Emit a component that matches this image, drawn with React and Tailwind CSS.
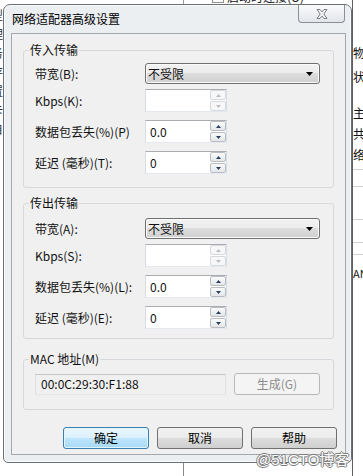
import React from 'react';

const btnFace = 'bg-[linear-gradient(#f2f2f2,#ebebeb_50%,#dddddd_50%,#cfcfcf)]';

function Arrow({ up, color }) {
  return (
    <svg width="5" height="3" viewBox="0 0 5 3">
      <path d={up ? 'M0 3h5L2.5 0z' : 'M0 0h5L2.5 3z'} fill={color} />
    </svg>
  );
}

function Combo({ value }) {
  return (
    <div className={`flex h-[21px] w-[175px] items-center justify-between rounded-[3px] border border-[#707070] pl-[2px] pr-[6px] shadow-[inset_0_0_0_1px_#fbfbfb] ${btnFace}`}>
      <span className="leading-[16px]">{value}</span>
      <svg width="7" height="4" viewBox="0 0 7 4">
        <path d="M0 0h7L3.5 4z" fill="#000" />
      </svg>
    </div>
  );
}

function Spin({ value, disabled }) {
  const arrow = disabled ? '#b8bcc2' : '#26405e';
  return (
    <div className="flex h-[23px] w-[82px] border border-[#abadb3] border-x-[#d8dbe2] border-b-[#e3e9ef] bg-white">
      <div className="flex flex-1 items-center pl-[4px] leading-[16px]">{value}</div>
      <div className="flex w-[16px] flex-col gap-[1px]">
        <div className={`flex flex-1 items-center justify-center rounded-[2px] border ${disabled ? 'border-[#d6d9dd] bg-[#f7f7f7]' : 'border-[#b9bdc2] bg-[linear-gradient(#fafafa,#e4e6e9)]'}`}>
          <Arrow up color={arrow} />
        </div>
        <div className={`flex flex-1 items-center justify-center rounded-[2px] border ${disabled ? 'border-[#d6d9dd] bg-[#f7f7f7]' : 'border-[#b9bdc2] bg-[linear-gradient(#fafafa,#e4e6e9)]'}`}>
          <Arrow color={arrow} />
        </div>
      </div>
    </div>
  );
}

function Row({ label, children }) {
  return (
    <div className="flex items-center">
      <div className="w-[110px] leading-[16px]">{label}</div>
      {children}
    </div>
  );
}

function Group({ title, className, inner, children }) {
  return (
    <fieldset className={`mx-[11px] rounded-[3px] border border-[#d5d9dd] ${className}`}>
      <legend className="ml-[5px] px-[1px] leading-[16px]">{title}</legend>
      <div className={inner}>{children}</div>
    </fieldset>
  );
}

function Button({ children, primary, disabled, w = 'w-[86px]' }) {
  let look = `border-[#707070] ${btnFace} text-black`;
  if (primary) look = 'border-[#3c7fb1] bg-[linear-gradient(#eaf6fd,#d9f0fc_50%,#bee6fd_50%,#a7d9f5)] text-black shadow-[inset_0_0_0_1px_#e2f4fc]';
  if (disabled) look = 'border-[#b5b9bd] bg-[#f4f4f4] text-[#8d8d8d]';
  return (
    <div className={`flex h-[22px] items-center justify-center rounded-[3px] border leading-[16px] ${w} ${look}`}>
      {children}
    </div>
  );
}

export default function App() {
  const leftChars = ['型', '理', '务', '存', '置', '卡', '自'];
  return (
    <div className="relative h-[476px] w-[363px] overflow-hidden bg-white font-['Microsoft_YaHei','Noto_Sans_CJK_SC',sans-serif] text-[12px] text-[#111]">
      {/* background window */}
      <div className="flex h-full">
        <div className="w-[3px] overflow-hidden">
          <div className="-ml-[9px] flex flex-col pt-[5px] text-[12px] leading-[19px] text-[#333]">
            {leftChars.map((c) => (
              <span key={c}>{c}</span>
            ))}
          </div>
        </div>
        <div className="flex flex-1 flex-col">
          <div className="flex h-[4px] overflow-hidden">
            <div className="w-[181px] border-r border-[#9a9a9a]" />
            <div className="-mt-[11px] ml-[28px] flex items-center gap-[3px] leading-[16px]">
              <div className="h-[12px] w-[12px] border border-[#8e8f8f] bg-white" />
              <span>启动时连接(O)</span>
            </div>
          </div>
          <div className="flex-1" />
          <div className="flex h-[14px]">
            <div className="w-[181px] border-r border-[#8a8a8a]" />
          </div>
        </div>
        <div className="w-[11px] overflow-hidden border-l border-[#5d6166]">
          <div className="flex flex-col text-[12px] leading-[16px] text-[#111]">
            <span className="mt-[45px]">物</span>
            <span className="mt-[8px]">状</span>
            <span className="mt-[20px]">主</span>
            <span className="mt-[5px]">共</span>
            <span className="mt-[5px]">络</span>
            <div className="mt-[6px] h-[17px] border-t border-[#d0d0d0]" />
            <div className="h-[33px] border-t border-[#d0d0d0]" />
            <div className="h-[23px] border-t border-[#d0d0d0]" />
            <div className="h-[12px] border-t border-[#d0d0d0]" />
            <div className="border-t border-[#d0d0d0] pt-[10px] text-[11px]">AN</div>
          </div>
        </div>
      </div>

      {/* dialog window */}
      <div className="absolute left-[3px] top-[4px] flex h-[459px] w-[349px] flex-col rounded-t-[7px] rounded-b-[5px] border border-[#6c7076] bg-[#eceff2] shadow-[inset_0_0_0_1px_#f9fafb]">
        <div className="flex h-[28px] items-start justify-between">
          <div className="pl-[8px] pt-[6px] leading-[16px] text-black">网络适配器高级设置</div>
          <div className="mr-[6px] flex h-[18px] w-[47px] items-center justify-center rounded-b-[4px] border border-t-0 border-[#8b8f94] bg-[linear-gradient(#fbfbfc,#e2e5e9)]">
            <svg width="12" height="10" viewBox="0 0 12 10">
              <path
                d="M1 0.5h3l2 2.4 2-2.4h3L7.8 5 11 9.5H8L6 7.1 4 9.5H1L4.2 5z"
                fill="#f2f3f5"
                stroke="#7a7e84"
                strokeWidth="1"
                strokeLinejoin="round"
              />
            </svg>
          </div>
        </div>
        <div className="mx-[7px] mr-[5px] flex h-[422px] flex-col border border-[#a3a8ae] bg-[#f0f0f0] pt-[8px]">
          <Group title="传入传输" className="" inner="flex flex-col gap-[5px] pb-[13px] pl-[11px] pr-[13px] pt-[5px]">
            <Row label="带宽(B):">
              <Combo value="不受限" />
            </Row>
            <Row label="Kbps(K):">
              <Spin value="" disabled />
            </Row>
            <div className="mt-[3px]">
              <Row label="数据包丢失(%)(P)">
                <Spin value="0.0" />
              </Row>
            </div>
            <div className="mt-[3px]">
              <Row label="延迟 (毫秒)(T):">
                <Spin value="0" />
              </Row>
            </div>
          </Group>

          <Group title="传出传输" className="mt-[7px]" inner="flex flex-col gap-[5px] pb-[9px] pl-[11px] pr-[13px] pt-[7px]">
            <Row label="带宽(A):">
              <Combo value="不受限" />
            </Row>
            <Row label="Kbps(S):">
              <Spin value="" disabled />
            </Row>
            <div className="mt-[3px]">
              <Row label="数据包丢失(%)(L):">
                <Spin value="0.0" />
              </Row>
            </div>
            <div className="mt-[3px]">
              <Row label="延迟 (毫秒)(E):">
                <Spin value="0" />
              </Row>
            </div>
          </Group>

          <Group title="MAC 地址(M)" className="mt-[12px]" inner="flex items-center gap-[8px] pb-[14px] pl-[11px] pr-[13px] pt-[6px]">
            <div className="flex h-[21px] w-[191px] items-center border border-[#c3c6cb] border-x-[#dcdfe4] border-b-[#e3e6ea] bg-[#f0f0f0] pl-[5px] leading-[16px]">
              00:0C:29:30:F1:88
            </div>
            <Button disabled>生成(G)</Button>
          </Group>

          <div className="mt-[17px] flex justify-end gap-[8px] pr-[8px]">
            <Button primary>确定</Button>
            <Button>取消</Button>
            <Button>帮助</Button>
          </div>
        </div>
      </div>

      {/* watermark */}
      <div className="absolute left-[256px] top-[450px] font-['Liberation_Sans','Noto_Sans_CJK_SC',sans-serif] text-[15px] leading-[20px] text-white [text-shadow:1px_0_#7d7d7d,-1px_0_#7d7d7d,0_1px_#7d7d7d,0_-1px_#7d7d7d]">
        @51CTO博客
      </div>
    </div>
  );
}
